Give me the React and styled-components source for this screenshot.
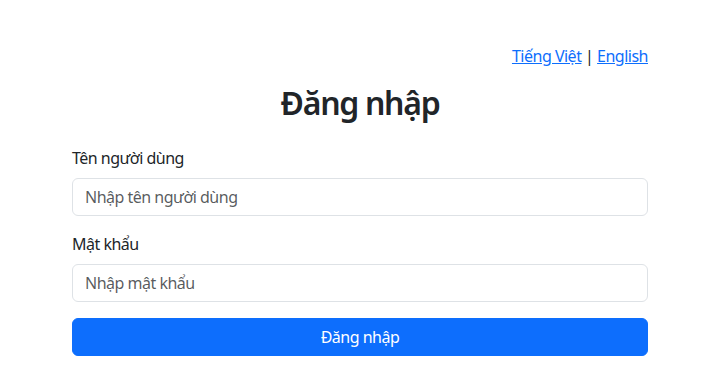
import styled, { createGlobalStyle } from 'styled-components';

const GlobalStyle = createGlobalStyle`
  * { box-sizing: border-box; }
  body {
    margin: 0;
    background: #fff;
    color: #212529;
    font-family: "Noto Sans", "Open Sans", sans-serif;
    font-size: 16px;
    line-height: 1.5;
    letter-spacing: -0.5px;
  }
`

const Container = styled.div`
  max-width: 601px;
  margin: 0 auto;
  padding: 44px 13px 0 12px;
`

const LangBar = styled.div`
  text-align: right;
  margin-bottom: 16px;

  a {
    color: #0d6efd;
    text-decoration: underline;
  }
`

const Title = styled.h2`
  margin: 0 0 24px;
  text-align: center;
  font-size: 32px;
  font-weight: 600;
  line-height: 1.2;
  letter-spacing: -1.3px;
`

const Field = styled.div`
  margin-bottom: 16px;
`

const Label = styled.label`
  display: inline-block;
  margin-bottom: 8px;
`

const Input = styled.input`
  display: block;
  width: 100%;
  height: 38px;
  padding: 6px 12px;
  font: inherit;
  letter-spacing: inherit;
  color: #212529;
  border: 1px solid #dee2e6;
  border-radius: 6px;
  outline: none;

  &::placeholder {
    color: rgba(33, 37, 41, 0.75);
  }
`

const Button = styled.button`
  display: block;
  width: 100%;
  height: 38px;
  padding: 6px 12px;
  font: inherit;
  letter-spacing: inherit;
  color: #fff;
  background: #0d6efd;
  border: 1px solid #0d6efd;
  border-radius: 6px;
`

export default function App() {
  return (
    <>
      <GlobalStyle />
      <Container>
        <LangBar>
          <a href="#">Tiếng Việt</a> | <a href="#">English</a>
        </LangBar>
        <Title>Đăng nhập</Title>
        <form onSubmit={e => e.preventDefault()}>
          <Field>
            <Label htmlFor="username">Tên người dùng</Label>
            <Input id="username" type="text" placeholder="Nhập tên người dùng" />
          </Field>
          <Field>
            <Label htmlFor="password">Mật khẩu</Label>
            <Input id="password" type="password" placeholder="Nhập mật khẩu" />
          </Field>
          <Button type="submit">Đăng nhập</Button>
        </form>
      </Container>
    </>
  );
}
